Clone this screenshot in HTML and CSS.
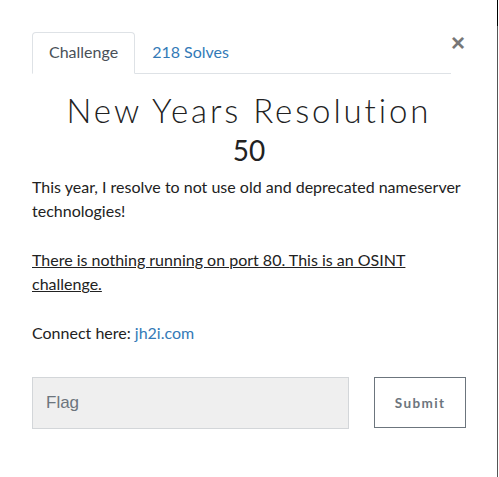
FILE: index.html
```html
<!DOCTYPE html>
<html>
<head>
<meta charset="utf-8">
<link rel="stylesheet" href="styles.css">
</head>
<body>
<div class="modal">
  <div class="header">
    <ul class="tabs">
      <li class="tab active">Challenge</li>
      <li class="tab link">218 Solves</li>
    </ul>
    <button class="close">×</button>
  </div>
  <h3 class="title">New Years Resolution</h3>
  <div class="value">50</div>
  <div class="desc">
    <p>This year, I resolve to not use old and deprecated nameserver technologies!</p>
    <p><u>There is nothing running on port 80. This is an OSINT challenge.</u></p>
    <p>Connect here: <a href="#">jh2i.com</a></p>
  </div>
  <div class="submit-row">
    <input class="flag" type="text" placeholder="Flag">
    <button class="submit">Submit</button>
  </div>
</div>
<div class="edge"></div>
</body>
</html>
```
FILE: styles.css
```css
html, body {
  margin: 0;
  padding: 0;
  background: #fff;
}
body {
  font-family: Lato, "Noto Sans", sans-serif;
  color: #212529;
  width: 499px;
  height: 477px;
  overflow: hidden;
  position: relative;
}
.modal {
  padding: 32px 33px 0 32px;
}
.header {
  display: flex;
  align-items: flex-start;
}
.tabs {
  list-style: none;
  margin: 0;
  padding: 0;
  display: flex;
  width: 420px;
  border-bottom: 1px solid #dee2e6;
}
.tab {
  font-size: 16px;
  line-height: 24px;
  padding: 7px 16px 9px;
  border: 1px solid transparent;
  border-radius: 4px 4px 0 0;
  margin-bottom: -1px;
}
.tab.active {
  color: #495057;
  border-color: #dee2e6 #dee2e6 #fff;
}
.tab.link {
  color: #337ab7;
}
.close {
  margin-left: auto;
  background: none;
  border: 0;
  padding: 0;
  font-family: "Liberation Sans", Arial, sans-serif;
  font-size: 24px;
  font-weight: 700;
  line-height: 20px;
  color: #777;
  margin-top: 1px;
  margin-right: 1px;
}
.title {
  margin: 16px 0 0;
  text-align: center;
  font-weight: 300;
  font-size: 33px;
  line-height: 40px;
  letter-spacing: 2.9px;
  color: #222;
}
.value {
  margin-top: 3px;
  text-align: center;
  font-size: 28px;
  line-height: 34px;
  color: #222;
}
.desc {
  margin-top: 8px;
  font-size: 16px;
  line-height: 24px;
  color: #222;
}
.desc p {
  margin: 0 0 25px;
}
.desc p:last-child {
  margin-bottom: 0;
}
.desc a {
  color: #337ab7;
  text-decoration: none;
}
.submit-row {
  display: flex;
  gap: 25px;
  margin-top: 32px;
  align-items: flex-start;
}
.flag {
  width: 318px;
  height: 52px;
  box-sizing: border-box;
  background: #efefef;
  border: 1px solid #d3d6d9;
  border-radius: 0;
  padding: 0 13px;
  font-family: "Liberation Sans", Arial, sans-serif;
  font-size: 17px;
  color: #495057;
  margin: 0;
}
.flag::placeholder {
  color: #6c757d;
}
.submit {
  width: 92px;
  height: 51px;
  box-sizing: border-box;
  background: #fff;
  border: 1px solid #6c757d;
  border-radius: 0;
  font-family: Lato, sans-serif;
  font-weight: 700;
  font-size: 13.5px;
  letter-spacing: 1.4px;
  color: #6c757d;
  margin: 0;
}
.edge {
  position: absolute;
  top: 0;
  right: 1px;
  width: 1px;
  height: 477px;
  background: linear-gradient(#000 0, #000 26px, #555 26px);
}
```
